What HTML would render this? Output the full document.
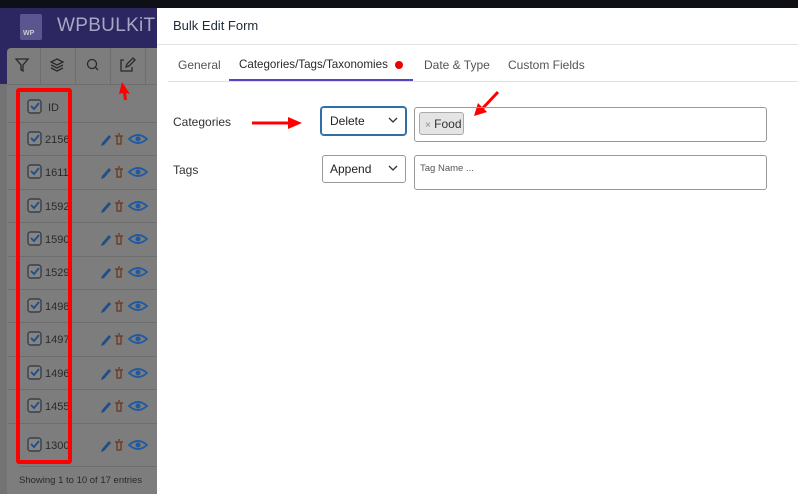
<!DOCTYPE html>
<html><head><style>
*{margin:0;padding:0;box-sizing:border-box}
body{width:798px;height:494px;overflow:hidden;position:relative;background:#737373;font-family:"Liberation Sans",sans-serif}
.abs{position:absolute}
.tab{position:absolute;top:58px;font-size:12px;color:#555}
.hl{position:absolute;left:8px;width:149px;height:1px;background:#6e6e6e}
</style></head><body>
<div class="abs" style="left:0;top:0;width:798px;height:8px;background:#0e1015"></div>
<div class="abs" style="left:0;top:8px;width:157px;height:76px;background:#2c2760"></div>
<div class="abs" style="left:20px;top:14px;width:22px;height:26px;background:#5c5690;border-radius:2px"></div>
<div class="abs" style="left:23px;top:30px;font-size:7px;color:#ccc;font-weight:bold">WP</div>
<div class="abs" style="left:57px;top:15px;font-size:19px;color:#a8a6c4;letter-spacing:0.3px">WPBULKiT</div>
<div class="abs" style="left:7px;top:48px;width:150px;height:446px;background:#7d7d7d;border-radius:4px 0 0 0"></div>
<div class="abs" style="left:7px;top:84px;width:150px;height:1px;background:#6e6e6e"></div>
<div class="abs" style="left:40px;top:48px;width:1px;height:36px;background:#6e6e6e"></div>
<div class="abs" style="left:75px;top:48px;width:1px;height:36px;background:#6e6e6e"></div>
<div class="abs" style="left:110px;top:48px;width:1px;height:36px;background:#6e6e6e"></div>
<div class="abs" style="left:145px;top:48px;width:1px;height:36px;background:#6e6e6e"></div>
<svg class="abs" style="left:0;top:48px" width="157" height="36"><g fill="none" stroke="#2a2a2a" stroke-width="1.3">
<path d="M16 11h12l-5 6v6l-2-1v-5z"/>
<path d="M57 11l6 3-6 3-6-3z M51 17l6 3 6-3 M51 20l6 3 6-3"/>
<circle cx="92" cy="16" r="4.5"/><path d="M95 19l3 3"/>
<path d="M124 12h-3v11h11v-4 M126 19l1-3 6-6 2 2-6 6z"/></g></svg>
<svg class="abs" style="left:118px;top:82px" width="14" height="18"><path d="M4 0l8 12-4-1 1 7-3 0-1-7-4 1z" fill="#f00"/></svg>
<div class="hl" style="top:122px"></div><div class="hl" style="top:155px"></div><div class="hl" style="top:189px"></div><div class="hl" style="top:222px"></div><div class="hl" style="top:256px"></div><div class="hl" style="top:289px"></div><div class="hl" style="top:322px"></div><div class="hl" style="top:356px"></div><div class="hl" style="top:389px"></div><div class="hl" style="top:423px"></div>
<div class="abs" style="left:20px;top:466px;width:137px;height:1px;background:#6e6e6e"></div>
<div class="abs" style="left:19px;top:475px;font-size:9.5px;color:#2a2a2a">Showing 1 to 10 of 17 entries</div>
<svg class="abs" style="left:0;top:0" width="157" height="494">
<defs><g id="r">
<rect x="28" y="-7" width="13" height="13" rx="2.5" fill="#858585" stroke="#3a3f48" stroke-width="1.4"/>
<path d="M31 -1l3 3 5-6" fill="none" stroke="#1f4f86" stroke-width="1.8"/>
<path d="M102 4l7-8 2 2-7 8-3 1z" fill="#1f4f86"/>
<path d="M115 -3h8 M117 -3v8h4v-8 M118 -5h2" fill="none" stroke="#6b3318" stroke-width="1.2"/>
<path d="M129 0q9-8 18 0q-9 8-18 0z" fill="none" stroke="#1f5aa0" stroke-width="1.8"/><circle cx="138" cy="0" r="2.5" fill="#1f5aa0"/>
</g></defs>
<g font-family="Liberation Sans" font-size="11" fill="#2a2a2a">
<text x="48" y="111">ID</text>
<text x="45" y="143">2156</text><text x="45" y="176">1611</text><text x="45" y="210">1592</text><text x="45" y="243">1590</text><text x="45" y="276">1529</text><text x="45" y="310">1498</text><text x="45" y="343">1497</text><text x="45" y="377">1496</text><text x="45" y="410">1455</text><text x="45" y="449">1300</text></g>
<rect x="28" y="100" width="13" height="13" rx="2.5" fill="#858585" stroke="#3a3f48" stroke-width="1.4"/>
<path d="M31 106l3 3 5-6" fill="none" stroke="#1f4f86" stroke-width="1.8"/>
<use href="#r" y="139"/><use href="#r" y="172"/><use href="#r" y="206"/><use href="#r" y="239"/><use href="#r" y="272"/><use href="#r" y="306"/><use href="#r" y="339"/><use href="#r" y="373"/><use href="#r" y="406"/><use href="#r" y="445"/>
<rect x="18" y="90" width="52" height="372" fill="none" stroke="#f00" stroke-width="4" rx="1"/>
</svg>
<div class="abs" style="left:157px;top:8px;width:641px;height:486px;background:#fff"></div>
<div class="abs" style="left:173px;top:18px;font-size:13px;color:#1e2a3a">Bulk Edit Form</div>
<div class="abs" style="left:157px;top:44px;width:641px;height:1px;background:#e2e2e2"></div>
<div class="tab" style="left:178px">General</div>
<div class="tab" style="left:239px;color:#2a2a2a;font-size:11.6px">Categories/Tags/Taxonomies</div>
<div class="abs" style="left:395px;top:61px;width:8px;height:8px;border-radius:50%;background:#e00"></div>
<div class="tab" style="left:424px">Date &amp; Type</div>
<div class="tab" style="left:508px">Custom Fields</div>
<div class="abs" style="left:168px;top:81px;width:630px;height:1px;background:#e2e2e2"></div>
<div class="abs" style="left:229px;top:79px;width:184px;height:2px;background:#5b3fc4"></div>
<div class="abs" style="left:173px;top:115px;font-size:12px;color:#333">Categories</div>
<div class="abs" style="left:173px;top:163px;font-size:12px;color:#333">Tags</div>
<div class="abs" style="left:321px;top:107px;width:85px;height:28px;border:1px solid #2f6fa8;border-radius:3px;box-shadow:0 0 0 1px #2f6fa8"></div>
<div class="abs" style="left:330px;top:114px;font-size:12px;color:#222">Delete</div>
<div class="abs" style="left:322px;top:155px;width:84px;height:28px;border:1px solid #999;border-radius:3px"></div>
<div class="abs" style="left:330px;top:162px;font-size:12px;color:#222">Append</div>
<svg class="abs" style="left:0;top:0" width="798" height="494"><g fill="none" stroke="#333" stroke-width="1.3"><path d="M389 118l4 4 4-4 M389 166l4 4 4-4"/></g>
<path d="M252 123h38" stroke="#f00" stroke-width="3"/><path d="M288 117l14 6-14 6z" fill="#f00"/>
<path d="M498 92l-16 17" stroke="#f00" stroke-width="3"/><path d="M474 116l4-13 9 9z" fill="#f00"/></svg>
<div class="abs" style="left:414px;top:107px;width:353px;height:35px;border:1px solid #999;border-radius:3px"></div>
<div class="abs" style="left:419px;top:112px;width:45px;height:23px;border:1px solid #aaa;border-radius:3px;background:#e4e4e4;font-size:12px;color:#333;padding:4px 0 0 5px"><span style="color:#888;font-size:10px">×</span> Food</div>
<div class="abs" style="left:414px;top:155px;width:353px;height:35px;border:1px solid #999;border-radius:3px"></div>
<div class="abs" style="left:420px;top:163px;font-size:9.5px;color:#555">Tag Name ...</div>
</body></html>
